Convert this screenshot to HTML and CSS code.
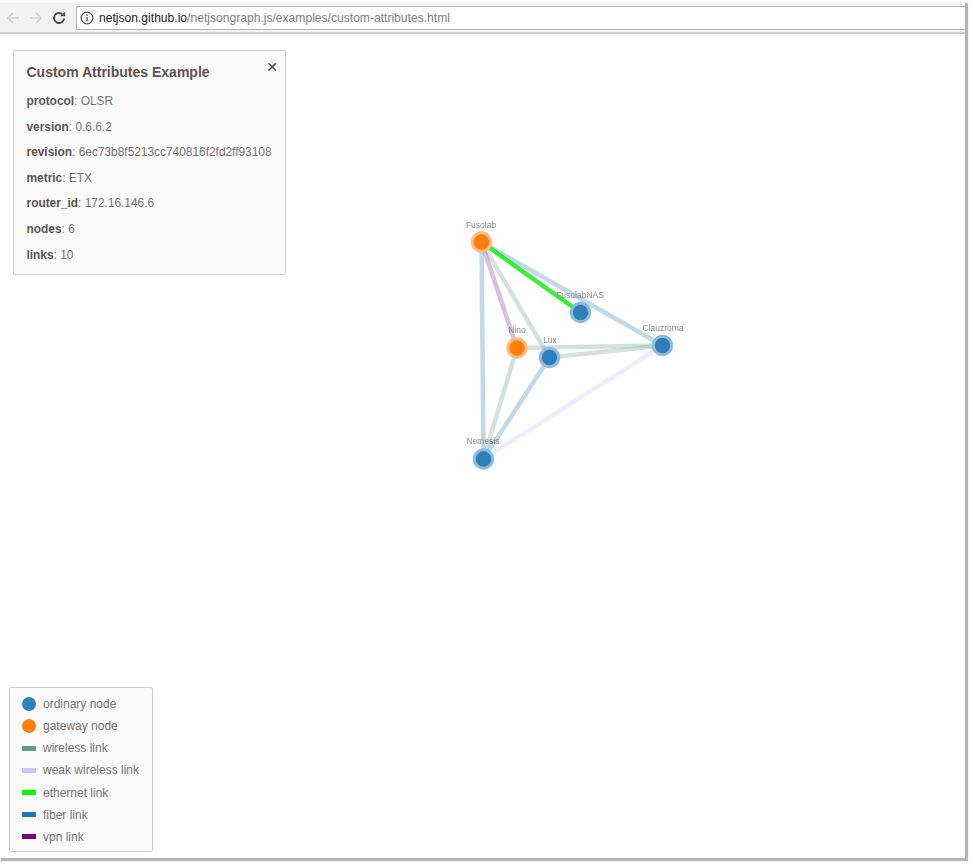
FILE: index.html
```html
<!DOCTYPE html>
<html lang="en">
<head>
<meta charset="utf-8">
<title>Custom Attributes Example</title>
<link rel="stylesheet" href="styles.css">
</head>
<body>
<div class="window">
  <header class="toolbar">
    <svg class="nav-icon" width="16" height="16" viewBox="0 0 16 16"><path d="M14 8H3M8 3 3 8l5 5" fill="none" stroke="#d2d2d2" stroke-width="1.7"/></svg>
    <svg class="nav-icon" width="16" height="16" viewBox="0 0 16 16"><path d="M2 8h11M8 3l5 5-5 5" fill="none" stroke="#d2d2d2" stroke-width="1.7"/></svg>
    <svg class="nav-icon reload" width="16" height="16" viewBox="0 0 16 16"><path d="M13 8.5A5 5 0 1 1 11.5 4.4" fill="none" stroke="#4a4a4a" stroke-width="1.9"/><path d="M9.6 6.2h4.6V1.6z" fill="#4a4a4a"/></svg>
    <div class="address">
      <svg width="14" height="14" viewBox="0 0 14 14"><circle cx="7" cy="7" r="5.8" fill="none" stroke="#555" stroke-width="1.3"/><path d="M7 6v4.2M7 3.6v1.4" stroke="#555" stroke-width="1.4"/></svg>
      <span class="url"><span class="host">netjson.github.io</span>/netjsongraph.js/examples/custom-attributes.html</span>
    </div>
  </header>
  <main class="stage">
    <svg class="graph" width="965" height="824" viewBox="0 34 965 824">
      <g class="links">
        <line class="wireless" x1="481.5" y1="242" x2="549.5" y2="357.5"/>
        <line class="fiber" x1="481.5" y1="242" x2="662.5" y2="345.5"/>
        <line class="fiber" x1="481.5" y1="242" x2="483.5" y2="459"/>
        <line class="vpn" x1="481.5" y1="242" x2="517" y2="348"/>
        <line class="ethernet" x1="481.5" y1="242" x2="580.5" y2="312.5"/>
        <line class="wireless" x1="517" y1="348" x2="662.5" y2="345.5"/>
        <line class="wireless" x1="549.5" y1="357.5" x2="662.5" y2="345.5"/>
        <line class="wireless" x1="517" y1="348" x2="483.5" y2="459"/>
        <line class="fiber" x1="549.5" y1="357.5" x2="483.5" y2="459"/>
        <line class="weak" x1="662.5" y1="345.5" x2="483.5" y2="459"/>
      </g>
      <g>
        <circle class="node gateway" cx="481.5" cy="242" r="9.2"/>
        <circle class="node" cx="580.5" cy="312.5" r="9.2"/>
        <circle class="node" cx="662.5" cy="345.5" r="9.2"/>
        <circle class="node gateway" cx="517" cy="348" r="9.2"/>
        <circle class="node" cx="549.5" cy="357.5" r="9.2"/>
        <circle class="node" cx="483.5" cy="459" r="9.2"/>
      </g>
      <g class="labels">
        <text x="481" y="228">Fusolab</text>
        <text x="580" y="298">FusolabNAS</text>
        <text x="663" y="331">Clauzroma</text>
        <text x="517" y="333">Nino</text>
        <text x="550" y="343">Lux</text>
        <text x="483" y="444">Nemesis</text>
      </g>
    </svg>

    <section class="panel">
      <button class="close" type="button">&#10005;</button>
      <h2>Custom Attributes Example</h2>
      <p><b>protocol</b>: OLSR</p>
      <p><b>version</b>: 0.6.6.2</p>
      <p><b>revision</b>: 6ec73b8f5213cc740816f2fd2ff93108</p>
      <p><b>metric</b>: ETX</p>
      <p><b>router_id</b>: 172.16.146.6</p>
      <p><b>nodes</b>: 6</p>
      <p><b>links</b>: 10</p>
    </section>

    <section class="legend">
      <div class="item"><i class="dot ordinary"></i>ordinary node</div>
      <div class="item"><i class="dot gate"></i>gateway node</div>
      <div class="item"><i class="bar k-wireless"></i>wireless link</div>
      <div class="item"><i class="bar k-weak"></i>weak wireless link</div>
      <div class="item"><i class="bar k-ethernet"></i>ethernet link</div>
      <div class="item"><i class="bar k-fiber"></i>fiber link</div>
      <div class="item"><i class="bar k-vpn"></i>vpn link</div>
    </section>
  </main>
</div>
</body>
</html>
```

FILE: styles.css
```css
html, body {
  margin: 0;
  padding: 0;
  height: 100%;
  background: #fff;
  overflow: hidden;
}

body {
  font-family: "Liberation Sans", Arial, sans-serif;
  color: #787270;
}

.window {
  width: 965px;
  height: 856px;
  margin-top: 2px;
  box-shadow: 2px 2px 1px 1px #b4b4b4;
  display: flex;
  flex-direction: column;
  background: #fff;
  filter: blur(0.35px);
}

.toolbar {
  flex: none;
  box-sizing: border-box;
  height: 32px;
  padding: 4px 0 3px 5px;
  display: flex;
  align-items: center;
  gap: 7px;
  background: #f2f2f2;
  border-top: 1px solid #f7f7f7;
  border-bottom: 2px solid #cfcfcf;
}

.nav-icon {
  flex: none;
}

.reload {
  margin-right: 2px;
}

.address {
  flex: 1;
  box-sizing: border-box;
  height: 24px;
  display: flex;
  align-items: center;
  gap: 5px;
  padding-left: 3px;
  background: #fff;
  border: 1px solid #b4b4b4;
  border-right: 0;
  border-radius: 2px 0 0 2px;
}

.url {
  font-size: 12.1px;
  color: #7d7d7d;
}

.host {
  color: #222;
}

.stage {
  flex: 1;
  position: relative;
  min-height: 0;
}

.graph {
  position: absolute;
  left: 0;
  top: 0;
}

.links line {
  stroke-width: 4.5px;
}

.wireless { stroke: #8fb4ac; opacity: .38; }
.fiber { stroke: #1f78b4; opacity: .27; }
.vpn { stroke: #7b1a85; opacity: .27; }
.ethernet { stroke: #16ee16; opacity: .85; }
.weak { stroke: #c8c8ff; opacity: .3; }

.node {
  fill: #2f7fbd;
  stroke: #8fbbdc;
  stroke-width: 3px;
}

.node.gateway {
  fill: #ff7f0e;
  stroke: #ffbc80;
}

.labels text {
  font-size: 8.5px;
  fill: #8a8a8a;
  text-anchor: middle;
}

.panel {
  position: absolute;
  left: 13px;
  top: 16px;
  box-sizing: border-box;
  width: 273px;
  height: 225px;
  padding: 13px 12.5px;
  background: #fbfbfb;
  border: 1px solid #ccc;
  border-radius: 2px;
}

.panel h2 {
  margin: 0 0 8px;
  font-size: 14px;
  line-height: 17px;
  font-weight: bold;
  color: #5c5451;
}

.panel p {
  margin: 0;
  font-size: 11.9px;
  line-height: 25.6px;
  white-space: nowrap;
}

.panel b {
  color: #5c5451;
}

.close {
  position: absolute;
  right: 7px;
  top: 9px;
  padding: 0;
  border: 0;
  background: none;
  font-size: 14px;
  line-height: 15px;
  color: #444;
  font-family: "DejaVu Sans", sans-serif;
}

.legend {
  position: absolute;
  left: 9px;
  bottom: 6px;
  box-sizing: border-box;
  width: 144px;
  height: 165px;
  padding: 5px 0 0 12px;
  background: #fbfbfb;
  border: 1px solid #ccc;
  border-radius: 2px;
}

.item {
  display: flex;
  align-items: center;
  height: 22.15px;
  font-size: 12px;
  white-space: nowrap;
}

.dot {
  flex: none;
  width: 14px;
  height: 14px;
  margin-right: 7px;
  border-radius: 50%;
}

.bar {
  flex: none;
  width: 14px;
  height: 5px;
  margin-right: 7px;
}

.ordinary { background: #2f7fbd; }
.gate { background: #ff7f0e; }
.k-wireless { background: #5f9b94; }
.k-weak { background: #c8c8ff; }
.k-ethernet { background: #00ff00; }
.k-fiber { background: #1f78b4; }
.k-vpn { background: #800080; }
```
